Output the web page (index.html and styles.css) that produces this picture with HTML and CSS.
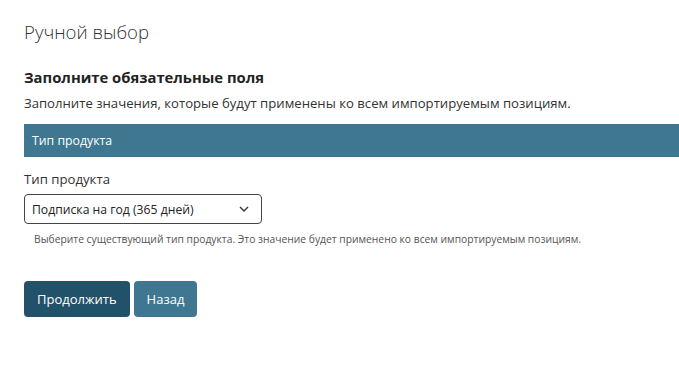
FILE: index.html
```html
<!DOCTYPE html>
<html lang="ru">
<head>
<meta charset="utf-8">
<link rel="stylesheet" href="styles.css">
</head>
<body>
<div class="page">
  <h1 class="title">Ручной выбор</h1>
  <h2 class="subtitle">Заполните обязательные поля</h2>
  <p class="intro">Заполните значения, которые будут применены ко всем импортируемым позициям.</p>
  <div class="section-bar">Тип продукта</div>
  <div class="field">
    <label class="field-label">Тип продукта</label>
    <div class="select">
      <span class="select-value">Подписка на год (365 дней)</span>
      <svg class="chevron" width="10" height="6" viewBox="0 0 10 6"><path d="M1 1l4 4 4-4" fill="none" stroke="#333" stroke-width="1.4"/></svg>
    </div>
    <div class="help">Выберите существующий тип продукта. Это значение будет применено ко всем импортируемым позициям.</div>
  </div>
  <div class="actions">
    <button class="btn btn-primary">Продолжить</button>
    <button class="btn btn-secondary">Назад</button>
  </div>
</div>
</body>
</html>
```
FILE: styles.css
```css
html, body { margin: 0; padding: 0; background: #fff; }
body { font-family: "Open Sans", "Noto Sans", sans-serif; color: #333; }
.page { padding: 19px 0 0 24px; }
.title { margin: 0; font-size: 18.6px; font-weight: 300; line-height: 26px; color: #333; }
.subtitle { margin: 22px 0 0; font-size: 14.8px; font-weight: 700; line-height: 20px; color: #222; }
.intro { margin: 6px 0 0; font-size: 13.15px; line-height: 20px; color: #333; }
.section-bar { margin-top: 11px; height: 33px; line-height: 33px; background: #407790; color: #fff; font-size: 12.3px; padding-left: 8px; }
.field { margin-top: 13px; }
.field-label { display: block; font-size: 13.2px; line-height: 18px; color: #333; }
.select { margin-top: 6px; height: 28px; border: 1px solid #444; border-radius: 4px; display: flex; align-items: center; justify-content: space-between; padding: 0 12px 0 7px; box-sizing: content-box; width: 217px; }
.select-value { font-size: 12.2px; color: #222; }
.help { margin-top: 8px; padding-left: 10px; font-size: 10.3px; line-height: 14px; color: #555; }
.actions { margin-top: 35px; display: flex; gap: 4px; }
.btn { border: none; border-radius: 4px; color: #fff; font-family: inherit; font-size: 13px; height: 36px; padding: 0 13px; }
.btn-primary { background: #22526a; }
.btn-secondary { background: #407790; }
```
